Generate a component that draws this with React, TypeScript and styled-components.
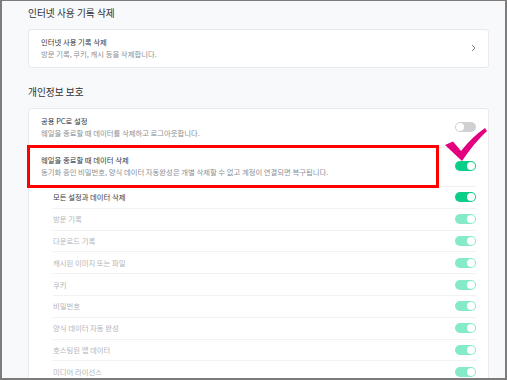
import React from "react";
import styled, { createGlobalStyle } from "styled-components";

const GlobalStyle = createGlobalStyle`
  html, body { margin: 0; padding: 0; background: #ffffff; }
  * { box-sizing: border-box; }
`;

const Frame = styled.div`
  position: relative;
  width: 507px;
  height: 380px;
  overflow: hidden;
  background: #f8f9fb;
  border: 2px solid #7c7c7c;
  border-top-width: 1px;
  font-family: "Noto Sans CJK KR", "Noto Sans", sans-serif;
  color: #333;
`;

const Content = styled.div`
  padding: 0 16px 0 26px;
`;

const Section = styled.section`
  margin-bottom: 17px;
`;

const SectionTitle = styled.h2`
  margin: 5px 0 9px;
  font-size: 9.7px;
  line-height: 14px;
  font-weight: 400;
  color: #2f3033;
  letter-spacing: 0;
`;

const Card = styled.div`
  background: #ffffff;
  border: 1px solid #e8eaee;
  border-radius: 3px;
  padding: 0 12px;
`;

const LinkRow = styled.div`
  display: flex;
  align-items: center;
  justify-content: space-between;
  padding: 6px 0 7px;
`;

const ToggleRow = styled.div`
  display: flex;
  align-items: center;
  justify-content: space-between;
  padding: 6px 0 8px;
  border-bottom: 1px solid #eef0f2;
`;

const TextBlock = styled.div`
  display: flex;
  flex-direction: column;
`;

const RowTitle = styled.div`
  font-size: 7.35px;
  line-height: 12px;
  color: #333438;
  white-space: nowrap;
`;

const RowDesc = styled.div`
  font-size: 7.35px;
  line-height: 12px;
  color: #8d8f94;
  white-space: nowrap;
`;

const SubList = styled.div`
  padding-left: 12px;
`;

const SubRow = styled.div<{ $strong?: boolean }>`
  display: flex;
  align-items: center;
  justify-content: space-between;
  height: 21.8px;
  border-bottom: 1px solid #f1f2f4;
  font-size: 7.35px;
  line-height: 12px;
  color: ${(p) => (p.$strong ? "#3a3b3f" : "#b3b5b9")};
  white-space: nowrap;
`;

const Toggle = styled.span<{ $state: "off" | "on" | "faded" }>`
  position: relative;
  flex: none;
  width: 21px;
  height: 10px;
  border-radius: 5px;
  background: ${(p) =>
    p.$state === "off" ? "#cfd0d2" : p.$state === "on" ? "#0bcf88" : "#84eac8"};
  &::after {
    content: "";
    position: absolute;
    top: 1px;
    ${(p) => (p.$state === "off" ? "left: 1px;" : "right: 1px;")}
    width: 8px;
    height: 8px;
    border-radius: 50%;
    background: #ffffff;
  }
`;

const Chevron = styled.svg`
  flex: none;
  width: 5px;
  height: 8px;
  margin-right: 0px;
`;

const Highlight = styled.div`
  position: absolute;
  left: 25px;
  top: 144px;
  width: 412px;
  height: 43px;
  border: 3px solid #ff0000;
`;

const CheckMark = styled.svg`
  position: absolute;
  left: 442px;
  top: 125px;
  width: 44px;
  height: 38px;
`;

const subItems = [
  "방문 기록",
  "다운로드 기록",
  "캐시된 이미지 또는 파일",
  "쿠키",
  "비밀번호",
  "양식 데이터 자동 완성",
  "호스팅된 앱 데이터",
  "미디어 라이선스",
];

export default function App() {
  return (
    <>
      <GlobalStyle />
      <Frame>
        <Content>
          <Section>
            <SectionTitle>인터넷 사용 기록 삭제</SectionTitle>
            <Card>
              <LinkRow>
                <TextBlock>
                  <RowTitle>인터넷 사용 기록 삭제</RowTitle>
                  <RowDesc>방문 기록, 쿠키, 캐시 등을 삭제합니다.</RowDesc>
                </TextBlock>
                <Chevron viewBox="0 0 5 8">
                  <path d="M1 1 L4 4 L1 7" fill="none" stroke="#808285" strokeWidth="1" />
                </Chevron>
              </LinkRow>
            </Card>
          </Section>
          <Section>
            <SectionTitle>개인정보 보호</SectionTitle>
            <Card>
              <ToggleRow>
                <TextBlock>
                  <RowTitle>공용 PC로 설정</RowTitle>
                  <RowDesc>웨일을 종료할 때 데이터를 삭제하고 로그아웃합니다.</RowDesc>
                </TextBlock>
                <Toggle $state="off" />
              </ToggleRow>
              <ToggleRow>
                <TextBlock>
                  <RowTitle>웨일을 종료할 때 데이터 삭제</RowTitle>
                  <RowDesc>
                    동기화 중인 비밀번호, 양식 데이터 자동완성은 개별 삭제할 수 없고 계정이 연결되면 복구됩니다.
                  </RowDesc>
                </TextBlock>
                <Toggle $state="on" />
              </ToggleRow>
              <SubList>
                <SubRow $strong>
                  모든 설정과 데이터 삭제
                  <Toggle $state="on" />
                </SubRow>
                {subItems.map((item) => (
                  <SubRow key={item}>
                    {item}
                    <Toggle $state="faded" />
                  </SubRow>
                ))}
              </SubList>
            </Card>
          </Section>
        </Content>
        <Highlight />
        <CheckMark viewBox="0 0 44 38">
          <path
            d="M1 19 L9 15.5 L17 25 Q28 11 41 2 L43 5 Q30 17 18 35 Z"
            fill="#e2007f"
          />
        </CheckMark>
      </Frame>
    </>
  );
}
